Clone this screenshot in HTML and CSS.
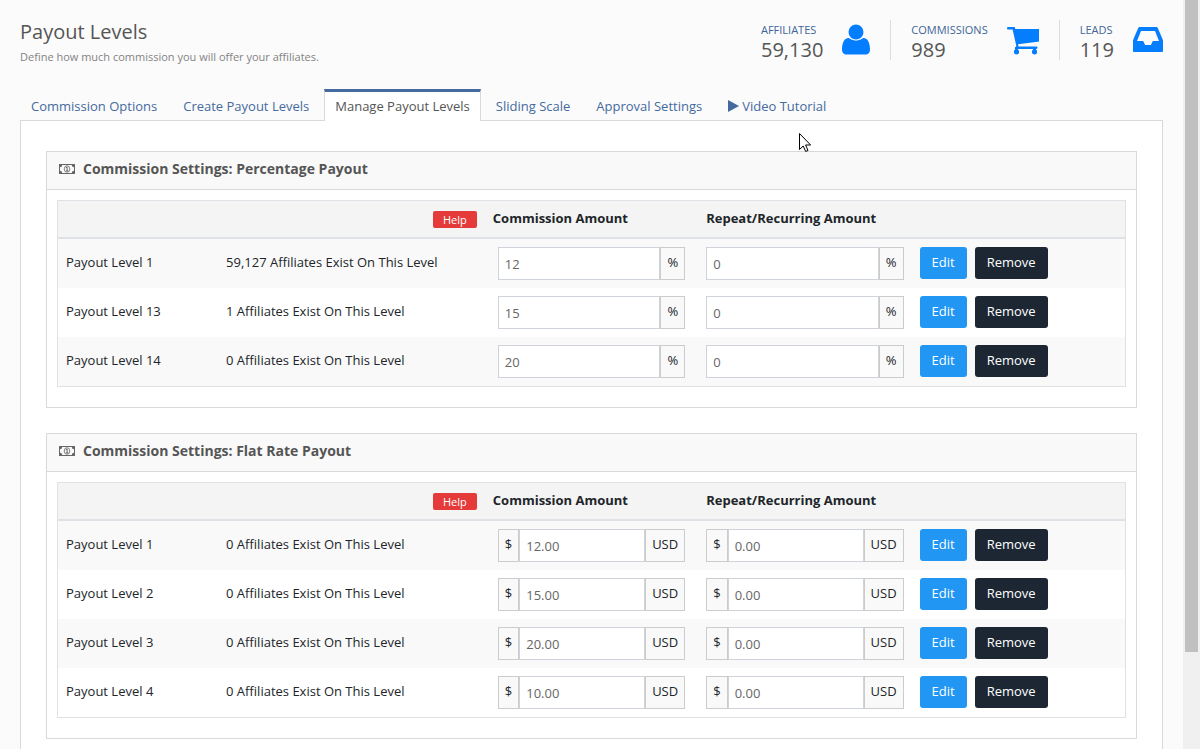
FILE: index.html
```html
<!DOCTYPE html>
<html lang="en">
<head>
<meta charset="utf-8">
<title>Payout Levels</title>
<link rel="stylesheet" href="styles.css">
</head>
<body>
<div class="app">
<main class="page">
  <header class="page-header">
    <div>
      <h1 class="page-title">Payout Levels</h1>
      <p class="page-subtitle">Define how much commission you will offer your affiliates.</p>
    </div>
    <div class="stats">
      <div class="stat">
        <div class="stat-text"><a class="stat-label" href="#">AFFILIATES</a><div class="stat-value">59,130</div></div>
        <svg class="stat-icon" width="28" height="32" viewBox="0 0 28 32"><circle cx="14" cy="8" r="7.500"/><path d="M6.500 14C2 14 0 19.500 0 25.500c0 3.500 2 5 4.500 5h19c2.500 0 4.500-1.500 4.500-5 0-6-2-11.500-6.500-11.500-1 0-3 2.500-7.500 2.500S7.500 14 6.500 14z"/></svg>
      </div>
      <div class="stat">
        <div class="stat-text"><a class="stat-label" href="#">COMMISSIONS</a><div class="stat-value">989</div></div>
        <svg class="stat-icon" width="32" height="32" viewBox="0 0 32 32"><path d="M1 3h6c.8 0 1.100.6 1.300 2H32v11.500c0 .8-.5 1.200-1.200 1.300L11 20.300l.5 2.200h17.800c1.600 0 1.600 2.400 0 2.400H10c-1 0-1.500-.6-1.300-1.400l.6-1.800L5.600 5.500H1C-.3 5.500-.3 3 1 3z"/><circle cx="9.500" cy="27.800" r="2.600"/><circle cx="27.500" cy="27.800" r="2.600"/><path d="M8 23h3v4H8zM26 24h3v3h-3z"/></svg>
      </div>
      <div class="stat">
        <div class="stat-text"><a class="stat-label" href="#">LEADS</a><div class="stat-value">119</div></div>
        <svg class="stat-icon" width="30" height="32" viewBox="0 0 30 32"><path fill-rule="evenodd" d="M7 3h16c1 0 1.500.3 1.900 1.200L29.500 15c.4.900.5 1.600.5 2.500V27c0 .7-.4 1-1 1H1c-.6 0-1-.3-1-1v-9.500c0-.9.1-1.600.5-2.500L5.100 4.200C5.500 3.300 6 3 7 3zM8 7L4 17h6.200l1.900 4h5.800l1.900-4H26L22 7z"/></svg>
      </div>
    </div>
  </header>

  <nav class="tabs">
    <a class="tab" href="#">Commission Options</a>
    <a class="tab" href="#">Create Payout Levels</a>
    <a class="tab tab-active" href="#" aria-current="page">Manage Payout Levels</a>
    <a class="tab" href="#">Sliding Scale</a>
    <a class="tab" href="#">Approval Settings</a>
    <a class="tab" href="#"><svg class="play" width="11" height="12" viewBox="0 0 11 12"><path d="M0 0l11 6-11 6z"/></svg>Video Tutorial</a>
  </nav>

  <div class="tab-panel">
    <section class="card">
      <h2 class="card-title"><svg class="money" width="16" height="12" viewBox="0 0 16 12"><path fill-rule="evenodd" d="M0 1h16v10H0zM3.200 2A2.200 2.200 0 0 1 1 4.200v3.600A2.200 2.200 0 0 1 3.200 10h9.600A2.200 2.200 0 0 1 15 7.800V4.200A2.200 2.200 0 0 1 12.800 2z"/><path d="M6.600 4.700L7.800 3.500h.8v4h.9v.9H6.800v-.9h.8V4.900l-.6.400z"/><ellipse class="money-ring" cx="8" cy="6" rx="2.800" ry="3.300"/></svg>Commission Settings: Percentage Payout</h2>
      <table class="levels">
        <thead><tr><th class="c-name"></th><th class="c-count"><button class="help">Help</button></th><th class="c-amount">Commission Amount</th><th class="c-amount">Repeat/Recurring Amount</th><th></th></tr></thead>
        <tbody>
          <tr><td>Payout Level 1</td><td>59,127 Affiliates Exist On This Level</td><td class="inset"><div class="group"><input class="field" aria-label="Commission amount" value="12"><span class="addon">%</span></div></td><td><div class="group"><input class="field" aria-label="Recurring amount" value="0"><span class="addon">%</span></div></td><td><div class="actions"><button class="btn btn-edit">Edit</button><button class="btn btn-remove">Remove</button></div></td></tr>
          <tr><td>Payout Level 13</td><td>1 Affiliates Exist On This Level</td><td class="inset"><div class="group"><input class="field" aria-label="Commission amount" value="15"><span class="addon">%</span></div></td><td><div class="group"><input class="field" aria-label="Recurring amount" value="0"><span class="addon">%</span></div></td><td><div class="actions"><button class="btn btn-edit">Edit</button><button class="btn btn-remove">Remove</button></div></td></tr>
          <tr><td>Payout Level 14</td><td>0 Affiliates Exist On This Level</td><td class="inset"><div class="group"><input class="field" aria-label="Commission amount" value="20"><span class="addon">%</span></div></td><td><div class="group"><input class="field" aria-label="Recurring amount" value="0"><span class="addon">%</span></div></td><td><div class="actions"><button class="btn btn-edit">Edit</button><button class="btn btn-remove">Remove</button></div></td></tr>
        </tbody>
      </table>
    </section>

    <section class="card">
      <h2 class="card-title"><svg class="money" width="16" height="12" viewBox="0 0 16 12"><path fill-rule="evenodd" d="M0 1h16v10H0zM3.200 2A2.200 2.200 0 0 1 1 4.200v3.600A2.200 2.200 0 0 1 3.200 10h9.600A2.200 2.200 0 0 1 15 7.800V4.200A2.200 2.200 0 0 1 12.800 2z"/><path d="M6.600 4.700L7.800 3.500h.8v4h.9v.9H6.800v-.9h.8V4.900l-.6.400z"/><ellipse class="money-ring" cx="8" cy="6" rx="2.800" ry="3.300"/></svg>Commission Settings: Flat Rate Payout</h2>
      <table class="levels">
        <thead><tr><th class="c-name"></th><th class="c-count"><button class="help">Help</button></th><th class="c-amount">Commission Amount</th><th class="c-amount">Repeat/Recurring Amount</th><th></th></tr></thead>
        <tbody>
          <tr><td>Payout Level 1</td><td>0 Affiliates Exist On This Level</td><td class="inset"><div class="group"><span class="addon">$</span><input class="field" aria-label="Commission amount" value="12.00"><span class="addon">USD</span></div></td><td><div class="group"><span class="addon">$</span><input class="field" aria-label="Recurring amount" value="0.00"><span class="addon">USD</span></div></td><td><div class="actions"><button class="btn btn-edit">Edit</button><button class="btn btn-remove">Remove</button></div></td></tr>
          <tr><td>Payout Level 2</td><td>0 Affiliates Exist On This Level</td><td class="inset"><div class="group"><span class="addon">$</span><input class="field" aria-label="Commission amount" value="15.00"><span class="addon">USD</span></div></td><td><div class="group"><span class="addon">$</span><input class="field" aria-label="Recurring amount" value="0.00"><span class="addon">USD</span></div></td><td><div class="actions"><button class="btn btn-edit">Edit</button><button class="btn btn-remove">Remove</button></div></td></tr>
          <tr><td>Payout Level 3</td><td>0 Affiliates Exist On This Level</td><td class="inset"><div class="group"><span class="addon">$</span><input class="field" aria-label="Commission amount" value="20.00"><span class="addon">USD</span></div></td><td><div class="group"><span class="addon">$</span><input class="field" aria-label="Recurring amount" value="0.00"><span class="addon">USD</span></div></td><td><div class="actions"><button class="btn btn-edit">Edit</button><button class="btn btn-remove">Remove</button></div></td></tr>
          <tr><td>Payout Level 4</td><td>0 Affiliates Exist On This Level</td><td class="inset"><div class="group"><span class="addon">$</span><input class="field" aria-label="Commission amount" value="10.00"><span class="addon">USD</span></div></td><td><div class="group"><span class="addon">$</span><input class="field" aria-label="Recurring amount" value="0.00"><span class="addon">USD</span></div></td><td><div class="actions"><button class="btn btn-edit">Edit</button><button class="btn btn-remove">Remove</button></div></td></tr>
        </tbody>
      </table>
    </section>
  </div>
</main>
<div class="scrollbar"><div class="scroll-thumb"></div></div>
</div>
<svg class="cursor" width="13" height="20" viewBox="0 0 13 20"><path d="M.5.500v16l3.700-3.500 2.500 5.500 2.300-1-2.400-5.500h5z" fill="#fff" stroke="#000"/></svg>
</body>
</html>
```
FILE: styles.css
```css
* { box-sizing: border-box; }

body {
  margin: 0;
  background: #fbfbfb;
  color: #212529;
  font-family: "Open Sans", sans-serif;
  font-size: 13px;
  line-height: 20px;
}

a { text-decoration: none; }

.app {
  display: flex;
  height: 100vh;
  overflow: hidden;
}

.page {
  flex: 1;
  padding: 20px 20px 0;
}

.page-header {
  display: flex;
  justify-content: space-between;
  align-items: flex-start;
  height: 69px;
}

.page-title {
  margin: 0;
  color: #555;
  font-size: 20px;
  font-weight: 400;
  line-height: 24px;
}

.page-subtitle {
  margin: 4px 0 0;
  color: #838383;
  font-size: 11px;
  line-height: 18px;
}

.stats { display: flex; }

.stat {
  display: flex;
  align-items: center;
  gap: 19px;
  height: 40px;
}

.stat + .stat {
  margin-left: 20px;
  padding-left: 20px;
  border-left: 1px solid #ddd;
}

.stat-text { padding-top: 2px; }

.stat-label {
  display: block;
  color: #3f6599;
  font-size: 11px;
  line-height: 18px;
}

.stat-value {
  color: #555;
  font-size: 20px;
  font-weight: 500;
  line-height: 22px;
}

.stat-icon { fill: #057dff; }

.tabs {
  display: flex;
  gap: 4px;
  position: relative;
}

.tab {
  padding: 4px 10px;
  border: 1px solid transparent;
  border-top-width: 3px;
  border-bottom: 0;
  color: #456a9e;
  line-height: 21px;
  height: 32px;
}

.tab-active {
  border-color: #456a9e #d9d9d9;
  background: #fff;
  color: #555;
}

.play {
  margin-right: 3px;
  vertical-align: -1px;
  fill: #456a9e;
}

.tab-panel {
  margin-top: -1px;
  padding: 30px 25px;
  border: 1px solid #d9d9d9;
  background: #fff;
}

.card {
  margin-bottom: 25px;
  padding-bottom: 20px;
  border: 1px solid #d9d9d9;
}

.card-title {
  display: flex;
  align-items: center;
  gap: 8px;
  height: 38px;
  margin: 0;
  padding: 0 12px 3px;
  border-bottom: 1px solid #d9d9d9;
  background: #f9f9f9;
  color: #555;
  font-size: 14px;
  font-weight: 700;
}

.money { fill: #666; }

.money-ring {
  fill: none;
  stroke: #888;
}

.levels {
  width: calc(100% - 20px);
  margin: 10px 10px 0;
  border: 1px solid #dee2e6;
  border-spacing: 0;
  table-layout: fixed;
}

.levels th {
  height: 38px;
  padding: 0 8px 2px;
  border-bottom: 2px solid #dee2e6;
  background: #f4f4f4;
  font-weight: 700;
  text-align: left;
}

.levels .c-name { width: 15%; }
.levels .c-count { width: 25%; text-align: right; }
.levels .c-amount { width: 20%; }

.levels td {
  padding: 8px;
  line-height: 30px;
  vertical-align: top;
}

.levels .inset { padding-left: 13px; padding-right: 13px; }
.levels tbody tr:nth-child(odd) { background: #f9f9f9; }

.help {
  display: inline-block;
  height: 17px;
  padding: 0 10px;
  border: 0;
  border-radius: 2px;
  background: #e53a3a;
  color: #fff;
  font: 11px/16px "Open Sans", sans-serif;
  vertical-align: middle;
}

.group {
  display: flex;
  height: 33px;
}

.field {
  flex: 1;
  min-width: 0;
  padding: 0 6px;
  border: 1px solid #ced4da;
  background: #fff;
  color: #666;
  font: 13px "Open Sans", sans-serif;
}

.addon {
  padding: 4px 6px;
  border: 1px solid #ccc;
  background: #f9f9f9;
  line-height: 20px;
}

.actions {
  display: flex;
  gap: 8px;
}

.btn {
  height: 32px;
  padding: 0 12px 2px;
  border: 0;
  border-radius: 3px;
  color: #fff;
  font: 13px "Open Sans", sans-serif;
}

.btn-edit { background: #2196f3; }
.btn-remove { background: #1c2733; }

.scrollbar {
  width: 17px;
  padding: 0 2px;
  background: #f0f0f0;
}

.scroll-thumb {
  height: 87%;
  background: #c0c0c0;
}

.cursor {
  position: absolute;
  left: 799px;
  top: 133px;
}
```
